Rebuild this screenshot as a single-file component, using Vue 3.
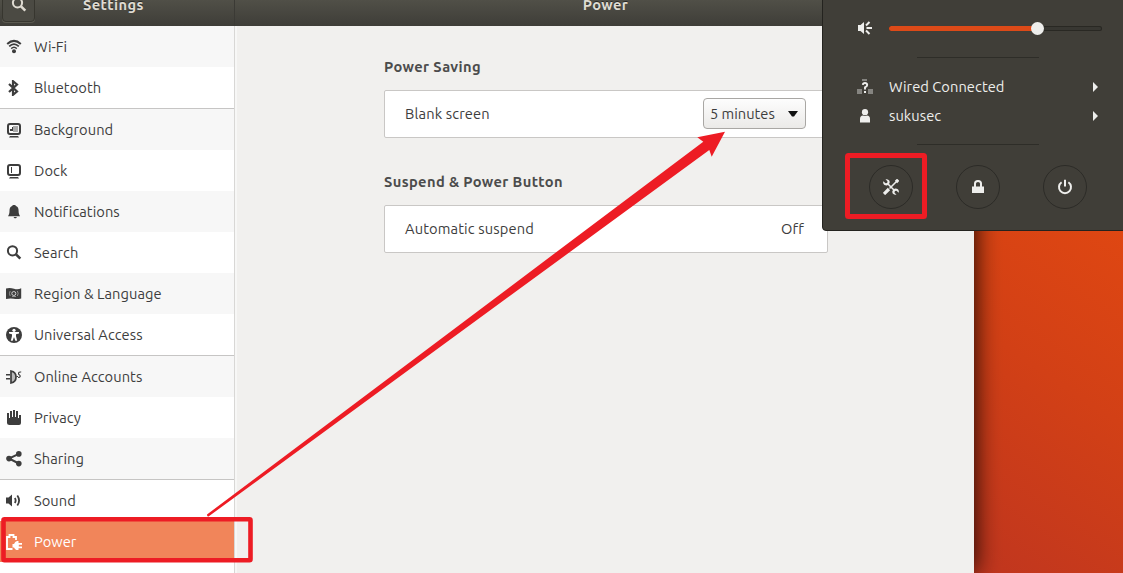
<script setup>
import { ref } from 'vue'

const items = ref([
  { icon: 'wifi', label: 'Wi-Fi', shaded: true },
  { icon: 'bluetooth', label: 'Bluetooth', divider: true },
  { icon: 'background', label: 'Background', shaded: true },
  { icon: 'dock', label: 'Dock' },
  { icon: 'bell', label: 'Notifications', shaded: true },
  { icon: 'search', label: 'Search' },
  { icon: 'flag', label: 'Region & Language', shaded: true },
  { icon: 'access', label: 'Universal Access', divider: true },
  { icon: 'plug', label: 'Online Accounts', shaded: true },
  { icon: 'hand', label: 'Privacy' },
  { icon: 'share', label: 'Sharing', shaded: true, divider: true },
  { icon: 'sound', label: 'Sound' },
  { icon: 'power', label: 'Power' }
])

const active = ref('Power')
const volume = ref(70)
</script>

<template>
  <div class="desktop">
    <div class="window">
      <header class="titlebar">
        <div class="titlebar-side">
          <button class="search-button" aria-label="Search">
            <svg width="16" height="16" viewBox="0 0 16 16">
              <circle cx="6.500" cy="5.800" r="4.600" fill="none" stroke="#dfdbd2" stroke-width="2" />
              <path d="M10 9.300l4.300 4.300" stroke="#dfdbd2" stroke-width="2.600" />
            </svg>
          </button>
          <span class="title title-settings">Settings</span>
        </div>
        <div class="titlebar-main">
          <span class="title">Power</span>
        </div>
      </header>

      <div class="window-body">
        <nav class="sidebar">
          <div
            v-for="item in items"
            :key="item.label"
            :class="['item', { shaded: item.shaded, divider: item.divider, active: item.label === active }]"
            @click="active = item.label">
            <svg class="item-icon" width="16" height="16" viewBox="0 0 16 16" fill="currentColor">
              <g v-if="item.icon === 'wifi'" fill="none" stroke="currentColor">
                <path d="M1.200 5Q8 -1.200 14.800 5" stroke-width="2" />
                <path d="M3.200 7.400Q8 2.800 12.800 7.400" stroke-width="1.800" />
                <path d="M5.200 9.600Q8 7 10.800 9.600" stroke-width="1.500" />
                <circle cx="8" cy="12.200" r="2" fill="currentColor" stroke="none" />
              </g>
              <path
                v-else-if="item.icon === 'bluetooth'"
                d="M3 4l8 7.500-4 3.300V1.200l4 3.300-8 7.500"
                fill="none" stroke="currentColor" stroke-width="2.200" />
              <g v-else-if="item.icon === 'background'">
                <rect x="2" y="2" width="12" height="10" rx="2" fill="none" stroke="currentColor" stroke-width="2" />
                <path d="M4 4h8v6H4z" fill="#fff" />
                <path d="M7 4h5v6H7z" fill="#aaa" />
                <path d="M4 9V7h2V5h1v4z" />
                <path d="M4 14h8l1 1.500H3z" />
              </g>
              <g v-else-if="item.icon === 'dock'">
                <rect x="2" y="2" width="12" height="10" rx="2" fill="none" stroke="currentColor" stroke-width="2" />
                <path d="M5 4h1v6H5z" />
                <path d="M4 14h8l1 1.500H3z" />
              </g>
              <path
                v-else-if="item.icon === 'bell'"
                d="M8 1c1 0 1.700.4 2 1 2 .8 2.600 2.500 2.600 5 0 2.300.4 3.500 1.500 5.200H2C3.100 10.500 3.500 9.300 3.500 7c0-2.500.6-4.200 2.600-5 .3-.6 1-1 1.900-1zM7.500 13h3.500L10 14.200H8.500z" />
              <g v-else-if="item.icon === 'search'" fill="none" stroke="currentColor">
                <circle cx="6.500" cy="5.800" r="4.600" stroke-width="2" />
                <path d="M10 9.300l4.300 4.300" stroke-width="2.600" />
              </g>
              <g v-else-if="item.icon === 'flag'">
                <path d="M0 2.500q4-1 8 .3t7.200-.6V12.500q-4 1-7.500.3T0 13z" />
                <circle cx="7.800" cy="7.500" r="2" fill="none" stroke="#ddd" stroke-width=".9" />
                <path d="M4.200 5q-1.500 2.500 0 5M11.400 5q1.500 2.500 0 5M6 10.500h4" fill="none" stroke="#aaa" stroke-width=".8" />
              </g>
              <g v-else-if="item.icon === 'access'">
                <circle cx="8" cy="8" r="8" />
                <circle cx="8" cy="3.300" r="1.600" fill="#fff" />
                <path d="M3 5h10v1.600l-3 .6v2l1.200 4.600H9.300L8.200 10.500h-.4L6.700 13.800H4.800L6 9V7.200l-3-.6z" fill="#fff" />
              </g>
              <g v-else-if="item.icon === 'plug'">
                <path d="M0 5h4v1.500H0zM0 9h4v1.500H0z" />
                <path d="M5 2q5 1 5 6t-5 6z" fill="#bbb" stroke="currentColor" stroke-width="1.700" />
                <path d="M10.500 7.500H12M15.200 3q-2.700-.3-2.700 1.500 0 1 1 1.500t.7 1.500q-.3 1-2.200 1" fill="none" stroke="currentColor" stroke-width="1.100" />
              </g>
              <path
                v-else-if="item.icon === 'hand'"
                d="M1 3h2v5h1V1h2v6h1V0h2v7h1V1h2v7h1V5h2v8q0 2-2 2H3.500Q1 15 1 13z" />
              <g v-else-if="item.icon === 'share'">
                <path d="M12.800 2.800L3 7.500l9.800 5" fill="none" stroke="currentColor" stroke-width="2" />
                <circle cx="12.800" cy="2.900" r="2.800" />
                <circle cx="3" cy="7.600" r="2.800" />
                <circle cx="12.800" cy="12.600" r="2.800" />
              </g>
              <g v-else-if="item.icon === 'sound'">
                <path d="M0 4.500h2.500L6 1.500v12l-3.500-3H0z" />
                <path d="M8.800 5q1.700 2.500 0 5M11.300 2.500q3.600 5 0 10" fill="none" stroke="currentColor" stroke-width="1.800" />
              </g>
              <g v-else>
                <path d="M6.500 15H1V3h2.500V1h4v2H10v3" fill="none" stroke="currentColor" stroke-width="1.800" />
                <path d="M8 10Q9 7.500 11 7h1.500v2H16v1.700h-3.200v1.800H16v1.700h-3.500v2H11q-2-.4-3-2.700H6.500V10z" />
              </g>
            </svg>
            <span class="item-label">{{ item.label }}</span>
          </div>
        </nav>

        <main class="panel">
          <h2 class="heading">Power Saving</h2>
          <div class="card">
            <span>Blank screen</span>
            <button class="select">
              <span>5 minutes</span>
              <svg width="10" height="6" viewBox="0 0 10 6"><path d="M0 0h10L6 5.500H4z" fill="#111" /></svg>
            </button>
          </div>
          <h2 class="heading">Suspend &amp; Power Button</h2>
          <div class="card">
            <span>Automatic suspend</span>
            <span class="value">Off</span>
          </div>
        </main>
      </div>
    </div>

    <aside class="menu">
      <div class="volume">
        <svg width="16" height="16" viewBox="0 0 16 16">
          <path d="M1 5h2.500L7 2v12l-3.500-3H1z" fill="#eeeeec" />
          <path d="M9 5.500L12.500 2M9.500 8H15M9 10.500l3.500 3.500" fill="none" stroke="#eeeeec" stroke-width="2" />
        </svg>
        <div class="slider">
          <div class="slider-fill" :style="{ width: volume + '%' }">
            <span class="knob"></span>
          </div>
        </div>
      </div>
      <hr class="separator">
      <div class="menu-row">
        <svg width="16" height="16" viewBox="0 0 16 16">
          <path d="M5 0h5v2H5zM0 10h5v5H0zM11 10h5v5h-5z" fill="#858480" />
          <path d="M5.800 5.800Q6 4 8 4t2.200 1.900Q10.200 7.200 8 8.300V10.500" fill="none" stroke="#eeeeec" stroke-width="1.900" />
          <path d="M7 12h2v2H7z" fill="#eeeeec" />
        </svg>
        <span>Wired Connected</span>
        <svg class="arrow" width="5" height="10" viewBox="0 0 5 10"><path d="M0 0l5 5-5 5z" fill="#eeeeec" /></svg>
      </div>
      <div class="menu-row">
        <svg width="16" height="16" viewBox="0 0 16 16" fill="#eeeeec">
          <circle cx="8" cy="4.200" r="3.100" />
          <path d="M3 11q0-3.500 3-3.500 2 1 4 0 3 0 3 3.500v3.500H3z" />
        </svg>
        <span>sukusec</span>
        <svg class="arrow" width="5" height="10" viewBox="0 0 5 10"><path d="M0 0l5 5-5 5z" fill="#eeeeec" /></svg>
      </div>
      <hr class="separator separator-low">
      <div class="actions">
        <button class="action" aria-label="Settings">
          <svg width="16" height="16" viewBox="0 0 16 16">
            <path d="M5 5l7 7M6.500 9.500l8-8" stroke="#eeeeec" stroke-width="1.600" />
            <path d="M1 15l5-5M13 3l2.200-2.200" stroke="#eeeeec" stroke-width="3.200" />
            <path d="M2.500.3l2 2-.3 1.700-1.700.3-2.200-2Q-.3 5 1.500 6q1.500.8 3 .2l2-2Q7 2.300 6 1.200 4.500-.1 2.500.3zM13.500 15.700l-2-2 .3-1.700 1.700-.3 2.200 2q.6-2.700-1.200-3.700-1.500-.8-3-.2l-2 2q-.5 1.900.5 3 1.500 1.300 3.500.9z" fill="#eeeeec" />
          </svg>
        </button>
        <button class="action" aria-label="Lock">
          <svg width="16" height="16" viewBox="0 0 16 16">
            <path d="M5 8V4.500Q5 2 8 2t3 2.500V8" fill="none" stroke="#eeeeec" stroke-width="2" />
            <path d="M2 7.500h12V14H2z" fill="#eeeeec" />
          </svg>
        </button>
        <button class="action" aria-label="Power off">
          <svg width="16" height="16" viewBox="0 0 16 16" fill="none" stroke="#eeeeec" stroke-width="2">
            <path d="M4.600 3.200a6 6 0 1 0 6.800 0M8 .8v6.700" />
          </svg>
        </button>
      </div>
    </aside>

    <svg class="marks" width="1123" height="573" viewBox="0 0 1123 573">
      <path d="M207 514.500L703.300 141.700 697.300 137.300 725 131.700 711.700 156.700 709.300 150 208.500 516.500q-1.500.5-1.500-2z" fill="#ed1c24" />
      <rect x="3.500" y="519.200" width="247" height="41" rx="1" fill="none" stroke="#ed1c24" stroke-width="4.600" />
      <rect x="847.500" y="155.500" width="77" height="61" rx="1" fill="none" stroke="#ed1c24" stroke-width="5" />
    </svg>
  </div>
</template>

<style>
body {
  margin: 0;
}
</style>

<style scoped>
.desktop {
  position: relative;
  width: 1123px;
  height: 573px;
  overflow: hidden;
  background: linear-gradient(214deg, #df4712 17%, #d24016 32%, #c0361f 51%);
  font-family: Ubuntu, "Noto Sans", sans-serif;
  font-size: 14.667px;
  letter-spacing: 0.06px;
  color: #3d3d3d;
}

button {
  font: inherit;
  letter-spacing: inherit;
  color: inherit;
  padding: 0;
}

svg {
  display: block;
  flex: none;
}

.window {
  display: flex;
  flex-direction: column;
  width: 974px;
  height: 573px;
  overflow: hidden;
  box-shadow: 0 0 24px rgba(0, 0, 0, 0.95);
}

.titlebar {
  display: flex;
  flex: none;
  height: 46px;
  margin-top: -20px;
  background: linear-gradient(#5a5950, #504f47 45%, #3e3d38);
  color: #dfdbd2;
}

.titlebar-side {
  display: flex;
  align-items: center;
  box-sizing: border-box;
  width: 235px;
  border-right: 1px solid #3b3a35;
}

.titlebar-main {
  flex: 1;
  display: flex;
  align-items: center;
  justify-content: center;
  padding-left: 2px;
}

.title {
  padding-top: 2px;
  font-weight: 700;
  letter-spacing: 0.4px;
  text-shadow: 0 -1px rgba(0, 0, 0, 0.5);
}

.title-settings {
  margin-left: 48px;
}

.search-button {
  display: flex;
  align-items: center;
  justify-content: center;
  box-sizing: border-box;
  width: 33px;
  height: 34px;
  margin: 4px 0 0 2px;
  border: 1px solid #37362f;
  border-radius: 4px;
  background: #4b4a43;
  box-shadow: 0 1px #5a5950;
}

.window-body {
  flex: 1;
  display: flex;
  background: #f1f0ee;
}

.sidebar {
  box-sizing: border-box;
  width: 235px;
  border-right: 1px solid #d8d7d5;
  background: #fff;
}

.item {
  display: flex;
  align-items: center;
  height: 41px;
  padding-left: 6px;
}

.item-icon {
  margin-right: 12px;
}

.item.shaded {
  background: #f7f7f7;
}

.item.divider {
  border-bottom: 1px solid #c6c5c4;
}

.item.active {
  background: #f1855a;
  color: #fff;
}

.panel {
  flex: 1;
  padding: 29px 0 0 147px;
  border-left: 2px solid #f7f7f6;
}

.heading {
  height: 24px;
  margin: 0 0 11px;
  line-height: 24px;
  font-size: 14.667px;
  font-weight: 700;
  letter-spacing: 0.38px;
  color: #4c4c4c;
}

.card {
  display: flex;
  align-items: center;
  justify-content: space-between;
  box-sizing: border-box;
  width: 444px;
  height: 48px;
  margin-bottom: 32px;
  padding: 0 21px 1px 20px;
  border: 1px solid #c9c7c5;
  border-radius: 2px;
  background: #fff;
  letter-spacing: 0.14px;
}

.value {
  margin-right: 2px;
}

.select {
  display: flex;
  align-items: center;
  justify-content: space-between;
  box-sizing: border-box;
  width: 103px;
  height: 31px;
  padding: 0 7px 0 6px;
  border: 1px solid #a9a7a4;
  border-radius: 4px;
  background: linear-gradient(#fdfdfd, #ebeae8);
  letter-spacing: 0;
}

.menu {
  position: absolute;
  top: -8px;
  left: 822px;
  box-sizing: border-box;
  width: 310px;
  height: 239px;
  padding-left: 34px;
  border: 1px solid #24231f;
  border-radius: 4px;
  background: #403e38;
  color: #eeeeec;
}

.volume {
  display: flex;
  align-items: center;
  height: 16px;
  margin-top: 27px;
}

.slider {
  box-sizing: border-box;
  width: 213px;
  height: 5px;
  margin: 1px 0 0 16px;
  border-radius: 3px;
  background: #383732;
  box-shadow: inset 0 0 0 1px #292823;
}

.slider-fill {
  position: relative;
  height: 5px;
  border-radius: 3px;
  background: #dd4a18;
}

.knob {
  position: absolute;
  top: -4px;
  right: -6px;
  width: 13px;
  height: 13px;
  border-radius: 50%;
  background: #eeeeec;
}

.separator {
  width: 122px;
  height: 1px;
  margin: 21px 0 14px 60px;
  border: 0;
  background: #2e2d28;
}

.separator-low {
  margin: 14px 0 20px 60px;
}

.menu-row {
  display: flex;
  align-items: center;
  height: 29px;
}

.menu-row span {
  margin-left: 16px;
}

.arrow {
  margin-left: auto;
  margin-right: 33px;
}

.actions {
  display: flex;
  gap: 43px;
  margin-left: 12px;
}

.action {
  display: flex;
  align-items: center;
  justify-content: center;
  box-sizing: border-box;
  width: 44px;
  height: 44px;
  border: 1px solid #2c2b27;
  border-radius: 50%;
  background: transparent;
}

.marks {
  position: absolute;
  top: 0;
  left: 0;
  pointer-events: none;
}
</style>
